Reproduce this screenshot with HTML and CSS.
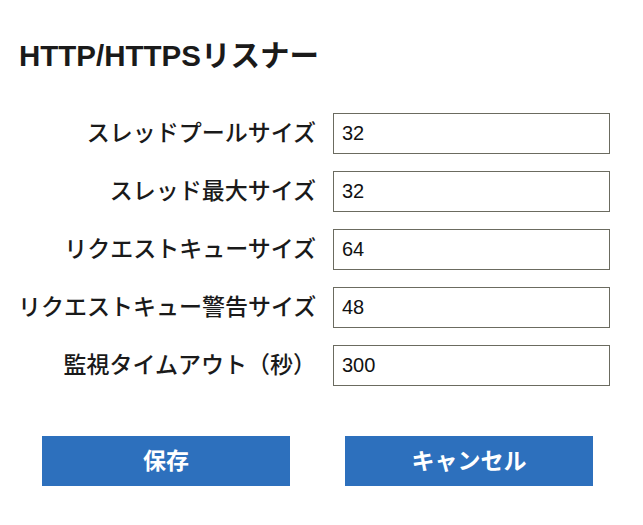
FILE: index.html
```html
<!DOCTYPE html>
<html lang="ja">
<head>
<meta charset="utf-8">
<link rel="stylesheet" href="styles.css">
</head>
<body>
<div class="page">
  <h1 class="title">HTTP/HTTPSリスナー</h1>
  <div class="form">
    <label class="label">スレッドプールサイズ</label>
    <div class="input">32</div>
    <label class="label">スレッド最大サイズ</label>
    <div class="input">32</div>
    <label class="label">リクエストキューサイズ</label>
    <div class="input">64</div>
    <label class="label">リクエストキュー警告サイズ</label>
    <div class="input">48</div>
    <label class="label">監視タイムアウト（秒）</label>
    <div class="input">300</div>
  </div>
  <div class="buttons">
    <button class="btn">保存</button>
    <button class="btn">キャンセル</button>
  </div>
</div>
</body>
</html>
```
FILE: styles.css
```css
html, body {
  margin: 0;
  padding: 0;
  background: #fff;
}
.page {
  padding: 38px 0 0 18px;
  font-family: "Liberation Sans", "Noto Sans CJK JP", sans-serif;
  color: #1a1a1a;
}
.title {
  margin: 0 0 0 1px;
  font-size: 29.5px;
  line-height: 36px;
  font-weight: bold;
}
.form {
  margin-top: 39px;
  display: grid;
  grid-template-columns: 298px 277px;
  column-gap: 17px;
  row-gap: 17px;
  align-items: center;
}
.label {
  text-align: right;
  white-space: nowrap;
  font-size: 23px;
  font-weight: 500;
  line-height: 41px;
}
.input {
  box-sizing: border-box;
  height: 41px;
  border: 1px solid #6b6b60;
  padding-left: 8px;
  font-size: 20px;
  line-height: 39px;
  color: #111;
}
.buttons {
  margin-top: 50px;
  padding-left: 24px;
  display: flex;
  gap: 55px;
}
.btn {
  width: 248px;
  height: 50px;
  border: none;
  background: #2d70bd;
  color: #fff;
  font-family: "Liberation Sans", "Noto Sans CJK JP", sans-serif;
  font-weight: bold;
  font-size: 23px;
  padding: 0 0 5px 0;
}
```
